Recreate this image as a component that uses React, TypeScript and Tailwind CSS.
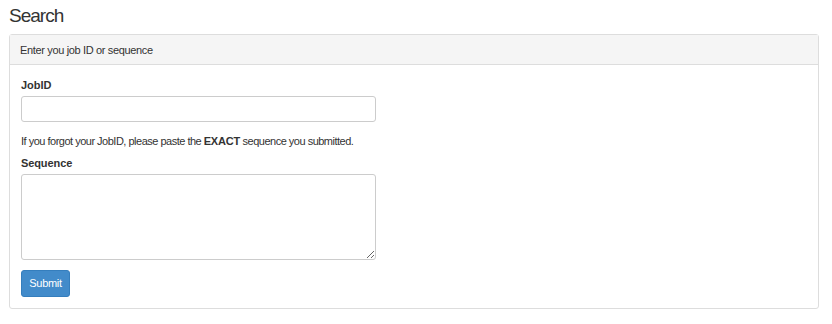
export default function App() {
  return (
    <div className="w-[832px] h-[324px] bg-white text-[#333]" style={{ fontFamily: '"Liberation Sans", Arial, sans-serif' }}>
      <div className="pl-[9px] pr-[13px]">
        <h2 className="text-[19px] leading-[22px] pt-[5px] pb-[7px] font-normal tracking-[-1px]">Search</h2>
        <div className="border border-[#dddddd] rounded-[3px]">
          <div className="bg-[#f5f5f5] border-b border-[#dddddd] h-[30px] px-[10px] pt-[2px] flex items-center text-[11px] tracking-[-0.35px]">
            Enter you job ID or sequence
          </div>
          <div className="px-[11px] pt-[12px] pb-[11px]">
            <label className="block text-[11px] font-bold leading-[16px] mb-[3px]">JobID</label>
            <input className="block w-[355px] h-[26px] border border-[#cccccc] rounded-[3px] bg-white" />
            <p className="text-[11px] leading-[16px] mt-[11px] tracking-[-0.5px]">
              If you forgot your JobID, please paste the <b className="tracking-[-0.2px]">EXACT</b> sequence you submitted.
            </p>
            <label className="block text-[11px] font-bold leading-[16px] mt-[6px] mb-[3px] tracking-[-0.1px]">Sequence</label>
            <textarea className="block w-[355px] h-[86px] border border-[#cccccc] rounded-[3px] bg-white" />
            <button className="mt-[10px] bg-[#428bca] border border-[#357ebd] text-white text-[11px] rounded-[3px] w-[49px] h-[27px] tracking-[-0.3px]">
              Submit
            </button>
          </div>
        </div>
      </div>
    </div>
  );
}
